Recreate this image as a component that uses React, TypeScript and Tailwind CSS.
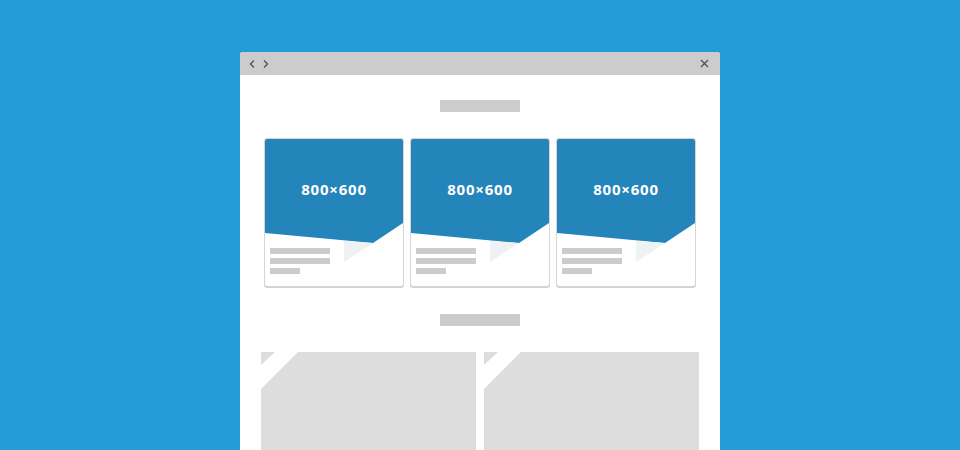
const cards = [0, 1, 2];
const panels = [0, 1];

function Card() {
  return (
    <div className="relative w-[140px] h-[149px] rounded-[3px] border border-[#d4d4d4] bg-white shadow-[0_1px_0_#d4d4d4] overflow-hidden flex flex-col">
      <div className="h-[104px] bg-[#2385b9] [clip-path:polygon(0_0,100%_0,100%_84px,108px_104px,0_94px)] flex items-start justify-center pt-[40px]">
        <span className="text-white font-bold text-[15px] leading-[20px] tracking-[0.8px] font-['Open_Sans',sans-serif]">
          800×600
        </span>
      </div>
      <svg className="absolute left-0 top-0" width="138" height="147" viewBox="0 0 138 147">
        <polygon points="79,102 108,104 79,123" fill="#eef2f2" />
      </svg>
      <div className="relative flex flex-col gap-[4px] pl-[5px] pt-[5px]">
        <div className="w-[60px] h-[6px] bg-[#cccccc]" />
        <div className="w-[60px] h-[6px] bg-[#cccccc]" />
        <div className="w-[30px] h-[6px] bg-[#cccccc]" />
      </div>
    </div>
  );
}

function Panel() {
  return (
    <div className="relative w-[215px] h-[120px] bg-[#dddddd]">
      <svg className="absolute left-0 top-0" width="40" height="40" viewBox="0 0 40 40">
        <polygon points="14,0 37,0 0,37 0,13" fill="#ffffff" />
      </svg>
    </div>
  );
}

export default function App() {
  return (
    <div className="w-[960px] h-[450px] overflow-hidden bg-[#229bd6] flex justify-center pt-[52px]">
      <div className="w-[480px] h-[420px] bg-white rounded-t-[3px] overflow-hidden flex flex-col">
        <div className="h-[24px] bg-[#cccccc] flex items-center justify-between px-[9px]">
          <div className="flex items-center gap-[8px]">
            <svg width="6" height="10" viewBox="0 0 6 10">
              <polyline points="5,1.5 1.5,5 5,8.5" fill="none" stroke="#555" strokeWidth="1.4" />
            </svg>
            <svg width="6" height="10" viewBox="0 0 6 10">
              <polyline points="1,1.5 4.5,5 1,8.5" fill="none" stroke="#555" strokeWidth="1.4" />
            </svg>
          </div>
          <svg width="9" height="9" viewBox="0 0 9 9" className="mr-[2px]">
            <path d="M1 1 L8 8 M8 1 L1 8" stroke="#555" strokeWidth="1.4" />
          </svg>
        </div>
        <div className="flex flex-col items-center pt-[25px]">
          <div className="w-[80px] h-[12px] bg-[#cccccc]" />
          <div className="flex gap-[6px] mt-[26px]">
            {cards.map((c) => (
              <Card key={c} />
            ))}
          </div>
          <div className="w-[80px] h-[12px] bg-[#cccccc] mt-[27px]" />
          <div className="flex gap-[8px] mt-[26px]">
            {panels.map((p) => (
              <Panel key={p} />
            ))}
          </div>
        </div>
      </div>
    </div>
  );
}
